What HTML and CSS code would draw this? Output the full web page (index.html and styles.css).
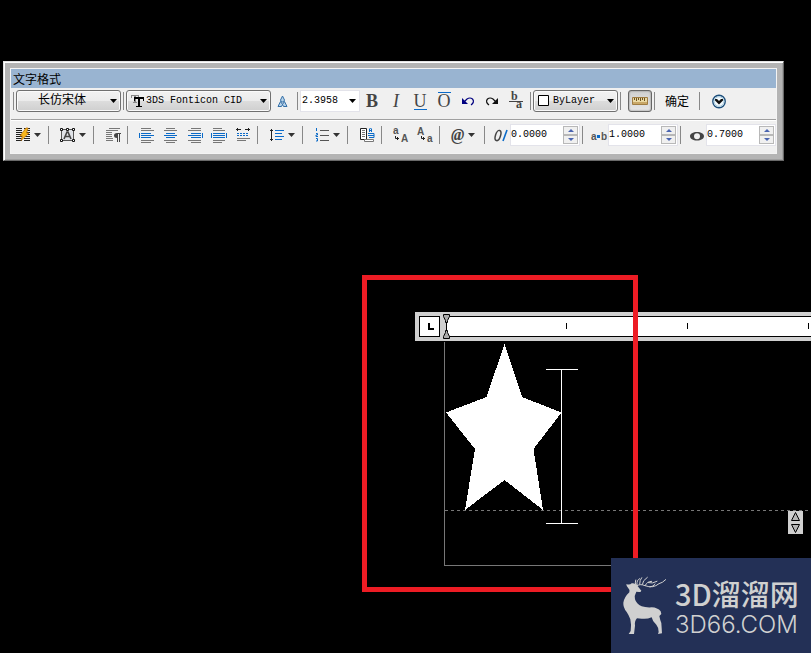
FILE: index.html
```html
<!DOCTYPE html>
<html lang="zh-CN">
<head>
<meta charset="utf-8">
<meta name="viewport" content="width=device-width, initial-scale=1">
<title>文字格式</title>
<link rel="stylesheet" href="styles.css">
</head>
<body>
<section class="frame" aria-label="文字格式">
  <div class="panel">
    <h1 class="title">文字格式</h1>

    <div class="row row-main">
      <i class="sep"></i>
      <div class="combo combo-style">
        <select aria-label="字体样式"><option>长仿宋体</option></select>
        <svg class="caret" width="7" height="4" viewBox="0 0 7 4"><path d="M0 0h7L3.500 4z"/></svg>
      </div>
      <i class="sep"></i>
      <div class="combo combo-font">
        <select aria-label="字体"><option>3DS Fonticon CID</option></select>
        <svg class="lead" width="14" height="14" viewBox="0 0 14 14"><path fill="#888" d="M0 1h8v3H7V2H5v6h1v1H2V8h1V2H1v2H0z"/><path d="M3 3h10v4h-1V5H9v7h2v1H5v-1h2V5H4v2H3z"/></svg>
        <svg class="caret" width="7" height="4" viewBox="0 0 7 4"><path d="M0 0h7L3.500 4z"/></svg>
      </div>
      <button class="tool" aria-label="注释性"><svg width="24" height="22" viewBox="0 0 24 22"><path fill="#b8d3ea" stroke="#3470a8" d="M11.500 6L13.500 10l-1 2h-2L9.500 10zM9.500 11.500L7 16.500h3.500l1-2zM13.500 11.500l2.500 5h-3.500l-1-2z"/></svg></button>
      <i class="sep"></i>
      <div class="combo combo-height">
        <input type="text" value="2.3958" aria-label="文字高度">
        <svg class="caret" width="7" height="4" viewBox="0 0 7 4"><path d="M0 0h7L3.500 4z"/></svg>
      </div>
      <button class="tool glyph bold">B</button>
      <button class="tool glyph italic">I</button>
      <button class="tool glyph"><span class="under">U</span></button>
      <button class="tool glyph"><span class="over">O</span></button>
      <button class="tool" aria-label="放弃"><svg width="24" height="22" viewBox="0 0 24 22"><path fill="#000080" d="M6 8v6h6z"/><path fill="none" stroke="#000080" stroke-width="1.200" d="M8 12L11 9q3-2 5.500 0 2.500 3-1.500 6"/></svg></button>
      <button class="tool" aria-label="重做"><svg width="24" height="22" viewBox="0 0 24 22"><path fill="#111" d="M18 8v6h-6z"/><path fill="none" stroke="#111" stroke-width="1.200" d="M16 12L13 9q-3-2-5.500 0-2.500 3 1.500 6"/></svg></button>
      <button class="tool" aria-label="堆叠"><svg width="24" height="22" viewBox="0 0 24 22"><path fill="#444" d="M5 11h14v1H5z"/><g class="svg-serif"><text x="7" y="10">b</text><text x="12" y="18">a</text></g></svg></button>
      <i class="sep"></i>
      <div class="combo combo-color">
        <select aria-label="颜色"><option>ByLayer</option></select>
        <svg class="lead" width="14" height="14" viewBox="0 0 14 14"><path fill="#fff" stroke="#000" d="M.5 1.500h10v10H.5z"/></svg>
        <svg class="caret" width="7" height="4" viewBox="0 0 7 4"><path d="M0 0h7L3.500 4z"/></svg>
      </div>
      <i class="sep"></i>
      <button class="tool pressed group" aria-label="标尺" aria-pressed="true"><svg width="22" height="20" viewBox="0 0 22 20"><path fill="#ead9a4" stroke="#a07d43" d="M3.500 6.500h15v7h-15z"/><path fill="#c9a868" d="M4 11h14v2H4z"/><path stroke="#6d5220" d="M5.500 7v2M7.500 7v3M9.500 7v2M11.500 7v3M13.500 7v2M15.500 7v3"/></svg></button>
      <i class="sep"></i>
      <button class="ok">确定</button>
      <i class="sep"></i>
      <button class="tool group" aria-label="选项"><svg width="24" height="22" viewBox="0 0 24 22"><circle cx="12" cy="11.500" r="6.200" fill="#f4fafd" stroke="#1d4f7c" stroke-width="1.400"/><circle cx="12" cy="11.500" r="4.800" fill="none" stroke="#a9cde0"/><path fill="#111" d="M8 9l2 0 2 2 2-2h2v1.500L12 14.500l-4-4z"/></svg></button>
    </div>

    <div class="row row-extra">
      <button class="split" aria-label="符号"><svg width="35" height="22" viewBox="0 0 35 22"><path stroke="#222" d="M5 4.500h6m2 0h6M5 6.500h6m2 0h6M5 8.500h6m2 0h6M5 10.500h6m2 0h6M5 12.500h6m2 0h6M5 14.500h6m2 0h6M5 16.500h6m2 0h6"/><path fill="#f8b81c" stroke="#c27a14" stroke-width=".8" d="M15 4l2 0-1.500 5H18l-8 7.500L11.500 12H9z"/><path fill="#333" d="M23 9h7l-3.500 4z"/></svg></button>
      <i class="sep"></i>
      <button class="split group" aria-label="文字对正"><svg width="35" height="22" viewBox="0 0 35 22"><path fill="#e0e3e8" stroke="#555" d="M5.500 5.500h12v11h-12z"/><path fill="#fff" stroke="#111" d="M4.500 4.500h2v2h-2zM10.500 4.500h2v2h-2zM16.500 4.500h2v2h-2zM4.500 15.500h2v2h-2zM16.500 15.500h2v2h-2z"/><path fill="none" stroke="#444" stroke-width="1.600" d="M8 15L11 8h1l3 7M9 12.500h5"/><path fill="#333" d="M23 9h7l-3.500 4z"/></svg></button>
      <i class="sep"></i>
      <button class="tool group" aria-label="段落"><svg width="24" height="22" viewBox="0 0 24 22"><path stroke="#777" d="M8 4.500h11M5 6.500h12M5 8.500h6M5 10.500h6M5 12.500h6M5 14.500h7M5 16.500h7"/><path fill="#444" d="M20 9v1h-1v8h-1v-8h-1v8h-1v-4q-3 0-3-2.500T16 9z"/></svg></button>
      <i class="sep"></i>
      <button class="tool group" aria-label="左对齐"><svg width="24" height="22" viewBox="0 0 24 22"><path stroke="#777" d="M6 4.500h10M6 6.500h13M6 16.500h13M6 18.500h10"/><path stroke="#0a6ac8" d="M4.500 9v5M6 9.500h10M6 11.500h13M6 13.500h10"/></svg></button>
      <button class="tool" aria-label="居中"><svg width="24" height="22" viewBox="0 0 24 22"><path stroke="#777" d="M7 4.500h9M5 6.500h13M5 16.500h13M7 18.500h9"/><path stroke="#0a6ac8" d="M7 9.500h9M5 11.500h13M7 13.500h9"/></svg></button>
      <button class="tool" aria-label="右对齐"><svg width="24" height="22" viewBox="0 0 24 22"><path stroke="#777" d="M8 4.500h10M5 6.500h13M5 16.500h13M8 18.500h10"/><path stroke="#0a6ac8" d="M19.500 9v5M8 9.500h10M5 11.500h13M8 13.500h10"/></svg></button>
      <button class="tool" aria-label="对正"><svg width="24" height="22" viewBox="0 0 24 22"><path stroke="#777" d="M6 4.500h9M6 6.500h12M6 16.500h12M6 18.500h9"/><path stroke="#0a6ac8" d="M4.500 9v5M19.500 9v5M6 9.500h12M6 11.500h12M6 13.500h12"/></svg></button>
      <button class="tool" aria-label="分布"><svg width="24" height="22" viewBox="0 0 24 22"><path stroke="#222" d="M5 5.500h5M14 5.500h5M6.500 4v3M17.500 4v3"/><path stroke="#0a6ac8" stroke-dasharray="2 1" d="M6 9.500h12M6 11.500h12"/><path stroke="#777" d="M6 14.500h13M6 16.500h9"/></svg></button>
      <i class="sep"></i>
      <button class="split group" aria-label="行距"><svg width="35" height="22" viewBox="0 0 35 22"><path stroke="#222" d="M6.500 5v12M5 6.500h3M5 15.500h3"/><path stroke="#0a6ac8" d="M10 6.500h9M10 9.500h7M10 12.500h9M10 15.500h7"/><path fill="#333" d="M23 9h7l-3.500 4z"/></svg></button>
      <i class="sep"></i>
      <button class="split group" aria-label="编号"><svg width="35" height="22" viewBox="0 0 35 22"><path fill="none" stroke="#0a6ac8" d="M6.500 4v3M6 9.500h1.500v1.500H6v1.500h2M6 14.500h1.500V17H6"/><path stroke="#555" d="M10 6.500h9M10 11.500h9M10 16.500h9"/><path fill="#333" d="M23 9h7l-3.500 4z"/></svg></button>
      <i class="sep"></i>
      <button class="tool group" aria-label="插入字段"><svg width="24" height="22" viewBox="0 0 24 22"><path fill="#fff" stroke="#222" d="M5.500 4.500h6v11h-6z"/><path stroke="#777" d="M7 6.500h3M7 8.500h3M7 10.500h3M7 12.500h3"/><path fill="none" stroke="#0a6ac8" d="M14.500 8V5l1-1 1 1v3M14.500 6.500h2M13 9.500h6v4h-5M13 11.500h6"/><path fill="#fff" stroke="#777" d="M9.500 15.500h9v2h-9z"/></svg></button>
      <i class="sep"></i>
      <button class="tool group" aria-label="大写"><svg width="24" height="22" viewBox="0 0 24 22"><g class="svg-sans"><text x="4" y="10">a</text><text x="12" y="18">A</text></g><path fill="none" stroke="#222" d="M6.500 12v2.500H10M8.500 13v3"/></svg></button>
      <button class="tool" aria-label="小写"><svg width="24" height="22" viewBox="0 0 24 22"><g class="svg-sans"><text x="4" y="11">A</text><text x="14" y="18">a</text></g><path fill="none" stroke="#222" d="M8.500 12v2.500H12M10.500 13v3"/></svg></button>
      <i class="sep"></i>
      <button class="split group at"><span>@</span><svg width="7" height="4" viewBox="0 0 7 4"><path fill="#333" d="M0 0h7L3.500 4z"/></svg></button>
      <i class="sep"></i>
      <label class="field group" for="oblique"><svg role="img" aria-label="倾斜角度" width="18" height="22" viewBox="0 0 18 22"><ellipse cx="6" cy="11.500" rx="2.500" ry="5.300" transform="rotate(18 6 11.500)" fill="none" stroke="#444" stroke-width="1.500"/><path stroke="#0a6ac8" stroke-width="1.600" d="M11 17l4-11"/></svg></label>
      <div class="spin"><input id="oblique" type="text" value="0.0000"><div class="steps"><button aria-label="增加"><svg width="6" height="3" viewBox="0 0 6 3"><path d="M0 3h6L3 0z"/></svg></button><button aria-label="减少"><svg width="6" height="3" viewBox="0 0 6 3"><path d="M0 0h6L3 3z"/></svg></button></div></div>
      <i class="sep"></i>
      <label class="field group" for="tracking"><svg role="img" aria-label="追踪" width="18" height="22" viewBox="0 0 18 22"><g class="svg-sans"><text x="1" y="16">a</text><text x="11" y="16">b</text></g><path fill="#0a6ac8" d="M7 11h3v3H7z"/></svg></label>
      <div class="spin"><input id="tracking" type="text" value="1.0000"><div class="steps"><button aria-label="增加"><svg width="6" height="3" viewBox="0 0 6 3"><path d="M0 3h6L3 0z"/></svg></button><button aria-label="减少"><svg width="6" height="3" viewBox="0 0 6 3"><path d="M0 0h6L3 3z"/></svg></button></div></div>
      <i class="sep"></i>
      <label class="field group" for="widthfactor"><svg role="img" aria-label="宽度因子" width="18" height="22" viewBox="0 0 18 22"><path fill="#444" fill-rule="evenodd" d="M9 8c4 0 7 1.800 7 4.200S13 16.500 9 16.500 2 14.600 2 12.200 5 8 9 8zm0 1.200c-2 0-3 1.200-3 3s1 3.100 3 3.100 3-1.300 3-3.100-1-3-3-3z"/></svg></label>
      <div class="spin"><input id="widthfactor" type="text" value="0.7000"><div class="steps"><button aria-label="增加"><svg width="6" height="3" viewBox="0 0 6 3"><path d="M0 3h6L3 0z"/></svg></button><button aria-label="减少"><svg width="6" height="3" viewBox="0 0 6 3"><path d="M0 0h6L3 3z"/></svg></button></div></div>
    </div>
  </div>
</section>

<main class="canvas">
  <div class="editor">
    <div class="ruler">
      <button class="tab-stop" aria-label="制表位"><svg width="20" height="20" viewBox="0 0 20 20"><path d="M8 6h2v5h4v2H8z"/></svg></button>
      <div class="scale"></div>
      <svg class="indent" width="9" height="25" viewBox="0 0 9 25"><path fill="#aaa" stroke="#000" d="M1.500.5h6v2L5.500 6.500v2h-2v-2l-2-4zM1.500 24.500h6v-2l-2-4v-2h-2v2l-2 4z"/></svg>
    </div>
    <div class="page">
      <svg class="drawing" width="140" height="190" viewBox="0 0 140 190" shape-rendering="crispEdges"><path fill="#fff" d="M60.500 2L78 55l39.500 15.500L89.500 107l9.500 61-38.500-30L21 168l10-61L2 70.500 42.500 55z"/><path stroke="#fff" d="M102 27.500h32M117.500 28v153M102 181.500h32"/></svg>
    </div>
    <button class="handle" aria-label="调整高度"><svg width="15" height="23" viewBox="0 0 15 23"><path fill="#b5b5b5" stroke="#000" d="M3.500 9.500h8l-4-8zM3.500 13.500h8l-4 8z"/></svg></button>
  </div>
  <div class="marker"></div>
  <div class="brand">
    <svg width="44" height="60" viewBox="36 51 132 180"><path fill="#d0d0d0" d="M46 78Q56 82 62 76Q72 74 78 82L91 98Q90 103 84 102L76 101Q69 113 72 124Q76 138 92 145Q104 149 122 148Q140 149 149 160L151 168L145 174Q147 185 151 195L153 226L141 228L143 222Q143 208 136 200Q124 190 122 178Q108 184 92 182L78 181Q70 190 72 203L69 228H53L59 219Q62 202 58 184Q54 172 47 162Q36 148 37 134Q40 117 55 103Q57 94 51 89Q46 85 46 78Z"/><g fill="none" stroke="#d0d0d0" stroke-width="3" stroke-linecap="round"><path d="M77 84Q86 76 102 83Q126 92 144 77Q154 75 164 65M76 82Q70 76 74 66M78 80Q76 66 86 62M86 78Q86 66 92 59M94 79Q94 68 109 58M103 82Q108 70 122 70M112 74Q124 78 138 70M117 87Q128 86 132 78"/></g></svg>
    <p class="brand-text"><span class="brand-name">3D溜溜网</span><span class="brand-site">3D66.COM</span></p>
  </div>
</main>
</body>
</html>
```
FILE: styles.css
```css
* { box-sizing: border-box; }

body {
  margin: 0;
  min-height: 100vh;
  display: flex;
  flex-direction: column;
  background: #000;
  color: #000;
  font: 12px/16px "Liberation Mono", "Noto Sans CJK SC", monospace;
  overflow-x: hidden;
}

button, select, input {
  margin: 0;
  padding: 0;
  border: 0;
  background: none;
  color: inherit;
  font: inherit;
}

svg { display: block; }

/* Floating toolbar */
.frame {
  margin: 61px 27px 0 3px;
  padding: 6px;
  background: #b4b4b4;
  border: 1px solid #e3e3e3;
  border-right-color: #696969;
  border-bottom-color: #696969;
  box-shadow: inset 1px 1px #fff, inset -1px -1px #a0a0a0;
}

.panel {
  border: 1px solid #f4f4f4;
  background: #f0f0f0;
}

.title {
  margin: 0;
  padding-left: 2px;
  background: #99b4d1;
  font: 12px/19px "Noto Sans CJK SC", sans-serif;
}

.row { display: flex; }

.row-main {
  padding: 2px 0 7px;
  border-bottom: 1px solid #a0a0a0;
}

.row-extra {
  padding: 3px 0 7px;
  border-top: 1px solid #fff;
}

.sep {
  flex: none;
  width: 1px;
  height: 18px;
  margin: 2px 2px 0;
  background: #888;
}

.group { margin-left: 5px; }

.tool, .split {
  flex: none;
  width: 24px;
  height: 22px;
}

.split { width: 35px; }

.glyph {
  color: #444;
  font: 18px/22px "Liberation Serif", serif;
}

.bold { font-weight: bold; }
.italic { font-style: italic; }

.under, .over {
  display: inline-block;
  line-height: 16px;
}

.under { border-bottom: 1px solid #0a6ac8; }
.over { border-top: 1px solid #0a6ac8; }

.pressed {
  border: 1px solid #666;
  border-radius: 3px;
  background: linear-gradient(#d0d0d0, #e6e6e6);
  box-shadow: inset 0 0 2px #777;
}

.ok {
  width: 40px;
  height: 22px;
  font-family: "Noto Sans CJK SC", sans-serif;
}

.at {
  display: flex;
  align-items: center;
  padding-left: 4px;
  gap: 4px;
  color: #444;
  font: italic bold 16px/20px "Liberation Serif", serif;
}

.svg-serif { font: bold 12px "Liberation Serif", serif; fill: #444; }
.svg-sans { font: bold 10px "Liberation Sans", sans-serif; fill: #555; }

/* Drop-downs */
.combo {
  flex: none;
  display: grid;
  align-items: center;
  height: 22px;
}

.combo > * { grid-area: 1 / 1; }

.combo select {
  appearance: none;
  width: 100%;
  height: 22px;
  padding: 0 16px 0 19px;
  border: 1px solid #707070;
  border-radius: 3px;
  background: linear-gradient(#f2f2f2, #ebebeb 50%, #ddd 50%, #cfcfcf);
  box-shadow: inset 0 0 0 1px #fafafa;
  font-size: 10px;
}

.combo-style { width: 105px; }
.combo-font { width: 145px; }
.combo-height { width: 60px; }
.combo-color { width: 85px; }
.combo.combo-style select { padding-left: 21px; font-size: 12px; }

.caret {
  justify-self: end;
  margin-right: 4px;
  pointer-events: none;
}

.lead {
  margin-left: 5px;
  pointer-events: none;
}

.combo input, .spin input {
  width: 100%;
  min-width: 0;
  height: 22px;
  padding: 0 0 2px 1px;
  border: 1px solid #e3e3ea;
  background: #fff;
  font-size: 10px;
}

/* Numeric fields */
.field { flex: none; }

.spin {
  flex: none;
  display: flex;
  width: 70px;
  height: 22px;
  background: #fff;
  border: 1px solid #e3e3ea;
}

.spin input { flex: 1; height: 20px; padding-left: 0; border: 0; }

.steps {
  display: grid;
  width: 15px;
  margin: 1px;
}

.steps button {
  display: grid;
  place-items: center;
  border: 1px solid #b8b8b8;
  background: #f0f0f0;
}

.steps path { fill: #4a64b0; }

/* Drawing area */
.canvas {
  position: relative;
  flex: 1;
  min-height: 492px;
}

.editor {
  position: absolute;
  left: 415px;
  right: 0;
  top: 151px;
}

.ruler {
  position: relative;
  display: flex;
  gap: 5px;
  padding: 4px 0 4px 4px;
  background: #d0d0d0;
}

.tab-stop {
  width: 21px;
  height: 21px;
  border: 1px solid #000;
  background: #fff;
}

.scale {
  flex: 1;
  margin-left: 1px;
  border: 1px solid #000;
  border-right: 0;
  background: repeating-linear-gradient(90deg, transparent 0 119px, #000 119px 120px, transparent 120px 121px) 0 6px / 100% 6px no-repeat #fff;
}

.indent {
  position: absolute;
  left: 27px;
  top: 2px;
}

.page {
  height: 224px;
  margin: 1px 0 0 29px;
  border-left: 1px solid #777;
  border-bottom: 1px solid #777;
  background: repeating-linear-gradient(90deg, #777 0 3px, transparent 3px 6px) 0 168px / 100% 1px no-repeat;
}

.drawing { margin-left: -1px; }

.handle {
  position: absolute;
  right: 8px;
  top: 199px;
  background: #d0d0d0;
}

.marker {
  position: absolute;
  left: 362px;
  top: 114px;
  width: 276px;
  height: 317px;
  border: 5px solid #ed1c24;
}

.brand {
  position: absolute;
  right: 0;
  bottom: 0;
  display: flex;
  gap: 8px;
  width: 200px;
  height: 95px;
  padding: 17px 0 0 12px;
  background: #233056;
  color: #d0d0d0;
}

.brand-text {
  display: grid;
  align-content: start;
  margin: 0;
  white-space: nowrap;
}

.brand-name { font: 500 29px/36px "Noto Sans CJK SC", sans-serif; }
.brand-site { font: 300 24px/28px Inter, sans-serif; }
```
